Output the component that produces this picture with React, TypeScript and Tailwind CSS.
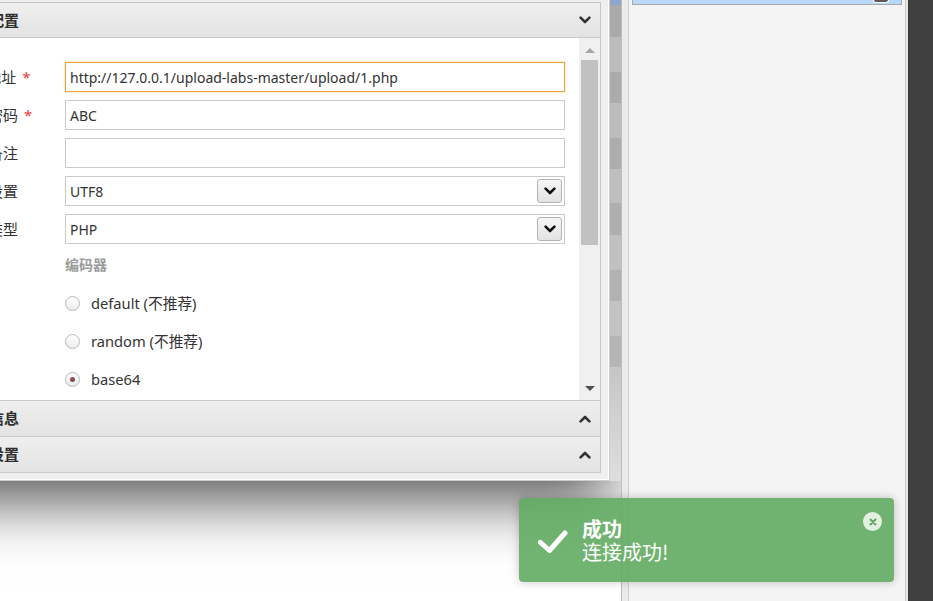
import React from "react";

const FONT = "font-['Noto_Sans','Noto_Sans_CJK_SC',sans-serif]";

function Chevron({ up = false, color = "#333333" }: { up?: boolean; color?: string }) {
  return (
    <svg width="12" height="8" viewBox="0 0 12 8" className="block">
      <polyline
        points={up ? "1.6,6.4 6,2 10.4,6.4" : "1.6,1.6 6,6 10.4,1.6"}
        fill="none"
        stroke={color}
        strokeWidth="2.6"
        strokeLinecap="round"
        strokeLinejoin="round"
      />
    </svg>
  );
}

function FormRow({ label, required, children }: { label: string; required?: boolean; children: React.ReactNode }) {
  return (
    <div className="flex items-center h-[30px]">
      <div className="w-[165px] shrink-0 flex items-center">
        <span className="ml-[58px] whitespace-nowrap text-[15px] text-[#333333]">{label}</span>
        {required && <span className="ml-[6px] text-[15px] text-[#e5393b]">*</span>}
      </div>
      {children}
    </div>
  );
}

function TextInput({ value, focused }: { value: string; focused?: boolean }) {
  return (
    <div
      className={
        focused
          ? "h-full w-[500px] border border-[#e6a63a] shadow-[0_0_2px_rgba(230,166,58,0.6)] bg-white flex items-center px-[4px] text-[14px] text-[#333333]"
          : "h-full w-[500px] border border-[#c9c9c9] bg-white flex items-center px-[4px] text-[14px] text-[#333333]"
      }
    >
      {value}
    </div>
  );
}

function SelectInput({ value }: { value: string }) {
  return (
    <div className="h-full w-[500px] border border-[#c9c9c9] bg-white flex items-center justify-between pl-[4px] pr-[2px] text-[14px] text-[#333333]">
      <span>{value}</span>
      <div className="w-[25px] h-[24px] rounded-[3px] border border-[#b3b3b3] bg-gradient-to-b from-[#f6f6f6] to-[#e2e2e2] flex items-center justify-center">
        <Chevron color="#111111" />
      </div>
    </div>
  );
}

function Radio({ label, checked }: { label: string; checked?: boolean }) {
  return (
    <div className="flex items-center h-[20px]">
      <div className="w-[15px] h-[15px] rounded-full border border-[#b9b9b9] bg-gradient-to-b from-white to-[#ececec] flex items-center justify-center">
        {checked && <div className="w-[5px] h-[5px] rounded-full bg-[#8d4b4b]" />}
      </div>
      <span className="ml-[11px] text-[14.7px] text-[#333333] whitespace-nowrap">{label}</span>
    </div>
  );
}

function SectionHeader({ title, up }: { title: string; up?: boolean }) {
  return (
    <div className="h-[36px] shrink-0 border-b border-[#c9c9c9] bg-gradient-to-b from-[#efefef] to-[#e3e3e3] flex items-center justify-between pr-[9px]">
      <span className="ml-[59px] whitespace-nowrap text-[15px] font-semibold text-[#2e2e2e]">{title}</span>
      <Chevron up={up} />
    </div>
  );
}

const stripes = [
  "h-[5px] bg-[#8ea6cd]",
  "h-[32px] bg-[#aaaaaa]",
  "h-[35px] bg-[#bcbcbc]",
  "h-[31px] bg-[#ababab]",
  "h-[35px] bg-[#bdbdbd]",
  "h-[31px] bg-[#adadad]",
  "h-[34px] bg-[#bfbfbf]",
  "h-[32px] bg-[#afafaf]",
  "h-[35px] bg-[#c1c1c1]",
  "h-[31px] bg-[#b2b2b2]",
  "h-[35px] bg-[#c3c3c3]",
  "h-[31px] bg-[#b5b5b5]",
];

export default function App() {
  return (
    <div className={"relative w-[933px] h-[601px] overflow-hidden flex bg-white " + FONT}>
      {/* left region with dialog (dialog extends off-screen to the left) */}
      <div className="w-[621px] h-full shrink-0 flex flex-col overflow-hidden bg-white">
        <div className="flex h-[481px] shrink-0 -ml-[100px]">
          {/* dialog */}
          <div className="w-[710px] h-[481px] shrink-0 flex flex-col bg-[#efefef] border-r border-b border-[#cdcdcd] pt-[2px] pr-[8px] pb-[7px] shadow-[inset_-1px_-1px_0_#ffffff,0_18px_60px_rgba(0,0,0,0.7)]">
            <div className="flex-1 flex flex-col border-t border-r border-[#c6c6c6] bg-white">
              {/* header */}
              <div className="h-[35px] shrink-0 border-b border-[#c9c9c9] bg-gradient-to-b from-[#efefef] to-[#e3e3e3] flex items-center justify-between pr-[9px]">
                <span className="ml-[59px] whitespace-nowrap text-[15px] font-semibold text-[#2e2e2e]">基础配置</span>
                <Chevron />
              </div>
              {/* body */}
              <div className="h-[363px] shrink-0 flex border-b border-[#c9c9c9]">
                <div className="flex-1 flex flex-col pt-[24px] gap-[8px]">
                  <FormRow label="URL地址" required>
                    <TextInput value="http://127.0.0.1/upload-labs-master/upload/1.php" focused />
                  </FormRow>
                  <FormRow label="连接密码" required>
                    <TextInput value="ABC" />
                  </FormRow>
                  <FormRow label="网站备注">
                    <TextInput value="" />
                  </FormRow>
                  <FormRow label="编码设置">
                    <SelectInput value="UTF8" />
                  </FormRow>
                  <FormRow label="连接类型">
                    <SelectInput value="PHP" />
                  </FormRow>
                  <div className="mt-[3px] pl-[165px] flex flex-col gap-[18px]">
                    <div className="h-[20px] leading-[20px] text-[14px] font-semibold text-[#9b9b9b]">编码器</div>
                    <Radio label="default (不推荐)" />
                    <Radio label="random (不推荐)" />
                    <Radio label="base64" checked />
                  </div>
                </div>
                {/* scrollbar */}
                <div className="w-[21px] shrink-0 bg-[#f0f0f0] flex flex-col">
                  <div className="h-[21px] flex items-center justify-center pt-[3px]">
                    <div className="w-0 h-0 border-l-[5px] border-r-[5px] border-b-[5px] border-l-transparent border-r-transparent border-b-[#a5a5a5]" />
                  </div>
                  <div className="flex-1 px-[2px] pt-[1px]">
                    <div className="h-[185px] bg-[#c1c1c1]" />
                  </div>
                  <div className="h-[21px] flex items-center justify-center pb-[3px]">
                    <div className="w-0 h-0 border-l-[5px] border-r-[5px] border-t-[5px] border-l-transparent border-r-transparent border-t-[#505050]" />
                  </div>
                </div>
              </div>
              <SectionHeader title="请求信息" up />
              <SectionHeader title="其他设置" up />
            </div>
          </div>
          {/* striped column */}
          <div className="flex-1 flex flex-col">
            {stripes.map((c, i) => (
              <div key={i} className={c} />
            ))}
            <div className="flex-1 bg-gradient-to-b from-[#c6c6c6] to-[#dedede]" />
          </div>
        </div>
        <div className="flex-1" />
      </div>
      {/* separators */}
      <div className="w-px h-full bg-[#bdbdbd]" />
      <div className="w-[6px] h-full bg-[#ebebeb]" />
      <div className="w-px h-full bg-[#cdcdcd]" />
      {/* right panel */}
      <div className="w-[276px] h-full bg-[#f4f4f4] px-[3px]">
        <div className="relative h-[5px] bg-[#b9d6fb] border-x border-b border-[#a9a9a9]">
          <div className="absolute right-[12px] top-0 w-[16px] h-[3px] rounded-b-[3px] bg-[#5a5a5a] border-x border-b border-white" />
        </div>
      </div>
      <div className="w-px h-full bg-[#c8c8c8]" />
      <div className="w-[2px] h-full bg-[#e6e6e6]" />
      <div className="flex-1 h-full bg-[#404040] border-l border-[#383838]" />

      {/* toast */}
      <div className="absolute left-[519px] top-[498px] w-[375px] h-[84px] rounded-[4px] bg-[rgba(98,172,98,0.9)] shadow-[0_0_10px_rgba(0,0,0,0.22)] flex items-center">
        <svg width="31" height="25" viewBox="0 0 31 25" className="ml-[18px] mt-[2px] shrink-0">
          <polyline points="3.5,13.5 12.5,21.5 28,4" fill="none" stroke="#ffffff" strokeWidth="5" strokeLinecap="round" strokeLinejoin="round" />
        </svg>
        <div className="ml-[14px] text-white text-[20px] leading-[23px] font-['Noto_Sans_CJK_SC',sans-serif]">
          <div className="font-bold">成功</div>
          <div>连接成功!</div>
        </div>
        <div className="absolute top-[14px] right-[12px] w-[19px] h-[19px] rounded-full bg-[rgba(255,255,255,0.8)] flex items-center justify-center">
          <svg width="8" height="8" viewBox="0 0 8 8">
            <path d="M1.5 1.5 L6.5 6.5 M6.5 1.5 L1.5 6.5" stroke="#5fa55f" strokeWidth="2" strokeLinecap="round" />
          </svg>
        </div>
      </div>
    </div>
  );
}
